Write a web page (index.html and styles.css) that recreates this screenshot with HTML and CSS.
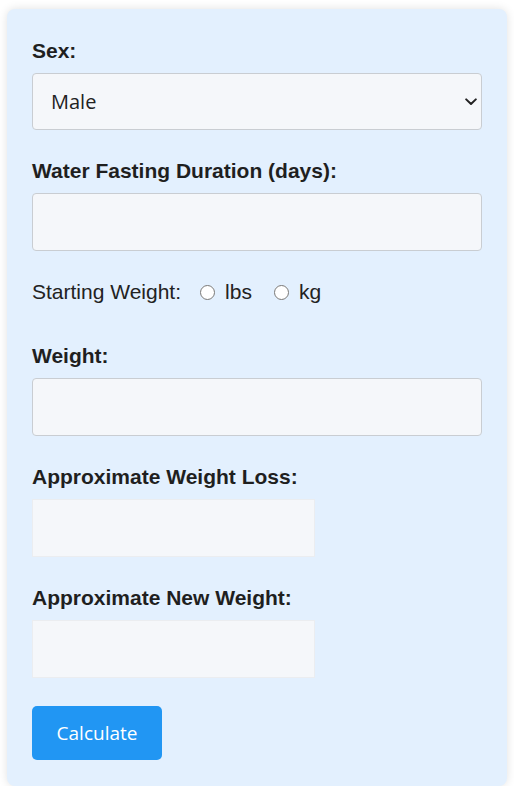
FILE: index.html
```html
<!DOCTYPE html>
<html lang="en">
<head>
<meta charset="utf-8">
<title>Water Fasting Weight Loss Calculator</title>
<link rel="stylesheet" href="styles.css">
</head>
<body>
<form class="card">
  <div class="group">
    <label class="label" for="sex">Sex:</label>
    <div class="select-wrap">
      <select id="sex" class="field select">
        <option>Male</option>
        <option>Female</option>
      </select>
      <svg class="chevron" width="12" height="8" viewBox="0 0 12 8" aria-hidden="true">
        <path d="M1.2 1.4 L6 6 L10.8 1.4" fill="none" stroke="#222" stroke-width="2" stroke-linecap="round" stroke-linejoin="round"/>
      </svg>
    </div>
  </div>

  <div class="group">
    <label class="label" for="days">Water Fasting Duration (days):</label>
    <input id="days" class="field" type="text">
  </div>

  <div class="unit-row">
    <span class="unit-title">Starting Weight:</span>
    <label class="unit"><input type="radio" name="unit" class="radio"> lbs</label>
    <label class="unit"><input type="radio" name="unit" class="radio"> kg</label>
  </div>

  <div class="group">
    <label class="label" for="weight">Weight:</label>
    <input id="weight" class="field" type="text">
  </div>

  <div class="group">
    <label class="label">Approximate Weight Loss:</label>
    <div class="output"></div>
  </div>

  <div class="group group-last">
    <label class="label">Approximate New Weight:</label>
    <div class="output"></div>
  </div>

  <button type="button" class="btn">Calculate</button>
</form>
</body>
</html>
```

FILE: styles.css
```css
* {
  box-sizing: border-box;
}

html, body {
  margin: 0;
  padding: 0;
  background: #ffffff;
}

body {
  font-family: "Liberation Sans", Arial, sans-serif;
  color: #222222;
}

.card {
  width: 500px;
  margin: 9px auto 0;
  padding: 30px 25px 26px;
  background: #e3f0fe;
  border-radius: 8px;
  box-shadow: 0 0 10px rgba(0, 0, 0, 0.12);
  display: flex;
  flex-direction: column;
  align-items: flex-start;
}

.group {
  display: flex;
  flex-direction: column;
  align-items: flex-start;
  width: 100%;
  margin-bottom: 29px;
}

.group-last {
  margin-bottom: 28px;
}

.label {
  display: block;
  font-size: 21px;
  line-height: 23px;
  font-weight: bold;
  color: #1f1f1f;
  margin-bottom: 11px;
}

.field {
  display: block;
  width: 100%;
  height: 58px;
  margin: 0;
  padding: 0 18px;
  border: 1px solid #c9cdd2;
  border-radius: 4px;
  background: #f5f7fa;
  font-family: "Open Sans", "Noto Sans", sans-serif;
  font-size: 20px;
  color: #222222;
  outline: none;
}

.select-wrap {
  position: relative;
  width: 100%;
}

.select {
  -webkit-appearance: none;
  appearance: none;
  height: 57px;
}

.chevron {
  position: absolute;
  right: 5px;
  top: 25px;
  pointer-events: none;
}

.unit-row {
  display: flex;
  align-items: center;
  height: 24px;
  margin-bottom: 40px;
  font-size: 21px;
  color: #222222;
}

.unit-title {
  margin-right: 19px;
}

.unit {
  display: flex;
  align-items: center;
  margin-right: 22px;
}

.radio {
  width: 15px;
  height: 15px;
  margin: 0 10px 0 0;
}

.output {
  width: 283px;
  height: 58px;
  background: #f5f7fa;
  border: 1px solid #ebedf0;
}

.btn {
  width: 130px;
  height: 54px;
  padding: 0;
  border: none;
  border-radius: 5px;
  background: #2196f3;
  color: #ffffff;
  font-family: "Open Sans", "Noto Sans", sans-serif;
  font-size: 19px;
  cursor: pointer;
}
```
